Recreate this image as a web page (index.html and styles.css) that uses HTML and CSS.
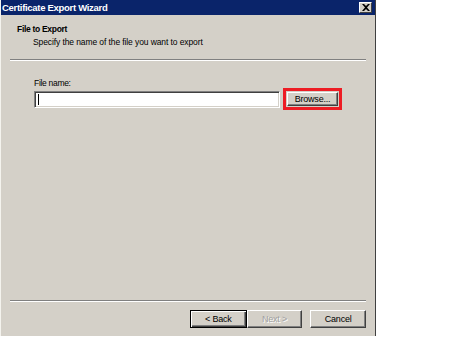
FILE: index.html
```html
<!DOCTYPE html>
<html lang="en">
<head>
  <meta charset="utf-8">
  <title>Certificate Export Wizard</title>
  <link rel="stylesheet" href="styles.css">
</head>
<body>
  <div class="window">
    <div class="titlebar">
      <span class="title">Certificate Export Wizard</span>
      <div class="close-btn">
        <svg width="8" height="7" viewBox="0 0 8 7">
          <path d="M0 0h2l2 2 2-2h2L5 3.5 8 7H6L4 5 2 7H0l3-3.5z" fill="#000"/>
        </svg>
      </div>
    </div>

    <div class="header">
      <div class="header-title">File to Export</div>
      <div class="header-sub">Specify the name of the file you want to export</div>
    </div>
    <div class="sep"></div>

    <div class="content">
      <div class="field-label">File name:</div>
      <div class="field-row">
        <div class="textbox"><span class="caret"></span></div>
        <div class="highlight">
          <div class="btn">Browse...</div>
        </div>
      </div>
    </div>

    <div class="sep"></div>
    <div class="footer">
      <div class="btn btn-default">&lt; Back</div>
      <div class="btn btn-disabled">Next &gt;</div>
      <div class="btn btn-cancel">Cancel</div>
    </div>
  </div>
</body>
</html>
```

FILE: styles.css
```css
body {
  margin: 0;
  background: #fff;
  font-family: "Liberation Sans", Arial, sans-serif;
  font-size: 9px;
  color: #000;
}

.window {
  width: 374px;
  height: 336px;
  background: #d4d0c8;
  border-left: 1px solid #f4f3ee;
  border-right: 1px solid #404040;
  display: flex;
  flex-direction: column;
}

.titlebar {
  height: 15px;
  background: #0a246a;
  display: flex;
  align-items: center;
  justify-content: space-between;
  padding: 0 3px 0 1px;
}

.title {
  color: #fff;
  font-weight: bold;
  font-size: 9.5px;
  letter-spacing: -0.3px;
}

.close-btn {
  box-sizing: border-box;
  width: 13px;
  height: 11px;
  background: #d4d0c8;
  border: 1px solid;
  border-color: #fff #404040 #404040 #fff;
  display: flex;
  align-items: center;
  justify-content: center;
}

.header {
  padding: 8px 0 0 16px;
  height: 36px;
}

.header-title {
  font-size: 8.5px;
  font-weight: bold;
  letter-spacing: -0.3px;
  line-height: 13px;
}

.header-sub {
  padding-left: 16px;
  font-size: 8.5px;
  line-height: 13px;
  letter-spacing: -0.1px;
}

.sep {
  margin: 0 9px;
  height: 1px;
  background: #808080;
  border-bottom: 1px solid #fff;
}

.content {
  flex: 1;
  padding: 18px 0 0 33px;
}

.field-label {
  font-size: 8.5px;
  letter-spacing: -0.3px;
  line-height: 9px;
}

.field-row {
  display: flex;
  align-items: center;
  gap: 3px;
}

.textbox {
  box-sizing: border-box;
  width: 246px;
  height: 17px;
  background: #fff;
  border: 1px solid;
  border-color: #808080 #fff #fff #808080;
  box-shadow: inset 1px 1px 0 #404040, inset -1px -1px 0 #d4d0c8;
  display: flex;
  align-items: center;
  padding-left: 3px;
}

.caret {
  width: 1px;
  height: 11px;
  background: #000;
}

.highlight {
  border: 3px solid #ed1c24;
  padding: 1px;
}

.btn {
  box-sizing: border-box;
  width: 56px;
  height: 18px;
  border: 1px solid;
  border-color: #fff #404040 #404040 #fff;
  box-shadow: inset -1px -1px 0 #808080;
  display: flex;
  align-items: center;
  justify-content: center;
  letter-spacing: -0.2px;
}

.highlight .btn {
  width: 51px;
  height: 14px;
}

.footer {
  display: flex;
  padding: 8px 9px 0 189px;
  height: 26px;
}

.btn-default {
  border: 1px solid #000;
  box-shadow: inset 1px 1px 0 #fff, inset -1px -1px 0 #404040, inset -2px -2px 0 #808080;
  width: 57px;
}

.btn-disabled {
  color: #a0a0a0;
  text-shadow: 1px 1px 0 #fff;
}

.btn-cancel {
  margin-left: 8px;
}
```
